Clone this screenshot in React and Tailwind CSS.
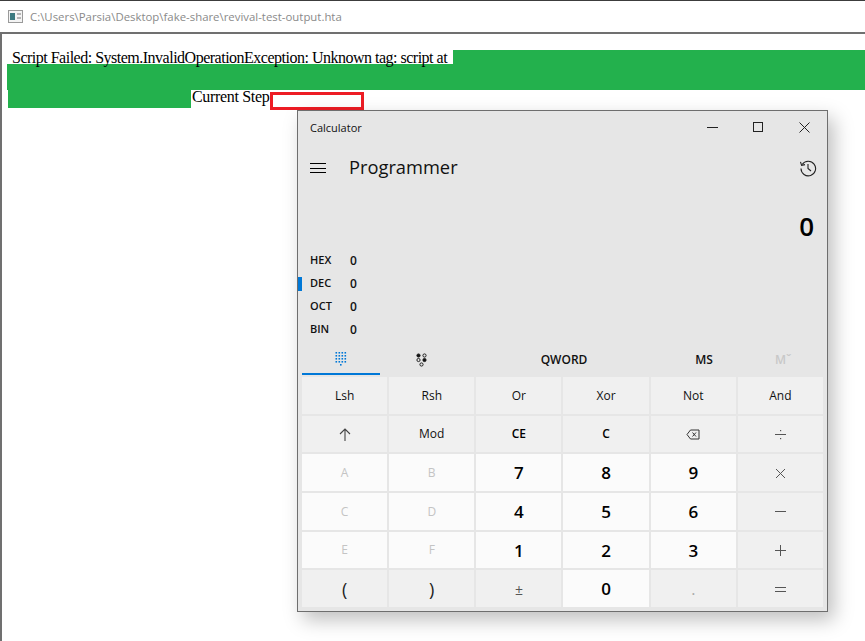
const sans = 'font-["Open_Sans","Noto_Sans",sans-serif]';

const Bksp = () => (
  <svg width="14" height="11" viewBox="0 0 14 11" fill="none" stroke="#333" strokeWidth="1">
    <path d="M4.5 1H13V10H4.5L1 5.5Z" />
    <path d="M6.5 3.5L10 7.5M10 3.5L6.5 7.5" />
  </svg>
);

const icons = {
  bksp: <Bksp />,
  up: (
    <svg width="12" height="13" viewBox="0 0 12 13" fill="none" stroke="#444" strokeWidth="1.1">
      <path d="M6 13V1M1 6l5-5 5 5" />
    </svg>
  ),
  div: (
    <svg width="13" height="13" viewBox="0 0 13 13" fill="#555">
      <rect x="1" y="6" width="11" height="1" />
      <rect x="6" y="2" width="1.2" height="1.2" />
      <rect x="6" y="10" width="1.2" height="1.2" />
    </svg>
  ),
  times: (
    <svg width="13" height="13" viewBox="0 0 13 13" fill="none" stroke="#555" strokeWidth="1">
      <path d="M2 2l9 9M11 2l-9 9" />
    </svg>
  ),
  minus: (
    <svg width="13" height="13" viewBox="0 0 13 13" fill="#555">
      <rect x="1" y="6" width="11" height="1" />
    </svg>
  ),
  plus: (
    <svg width="13" height="13" viewBox="0 0 13 13" fill="#555">
      <rect x="1" y="6" width="11" height="1" />
      <rect x="6" y="1" width="1" height="11" />
    </svg>
  ),
  eq: (
    <svg width="13" height="13" viewBox="0 0 13 13" fill="#555">
      <rect x="1" y="4" width="11" height="1" />
      <rect x="1" y="8" width="11" height="1" />
    </svg>
  ),
};

const keys = [
  [['Lsh', 'op'], ['Rsh', 'op'], ['Or', 'op'], ['Xor', 'op'], ['Not', 'op'], ['And', 'op']],
  [['up', 'op'], ['Mod', 'op'], ['CE', 'strong'], ['C', 'strong'], ['bksp', 'op'], ['div', 'op']],
  [['A', 'off'], ['B', 'off'], ['7', 'num'], ['8', 'num'], ['9', 'num'], ['times', 'op']],
  [['C', 'off'], ['D', 'off'], ['4', 'num'], ['5', 'num'], ['6', 'num'], ['minus', 'op']],
  [['E', 'off'], ['F', 'off'], ['1', 'num'], ['2', 'num'], ['3', 'num'], ['plus', 'op']],
  [['(', 'paren'], [')', 'paren'], ['±', 'math'], ['0', 'num'], ['.', 'dot'], ['eq', 'op']],
];

const keyStyles = {
  op: 'bg-[#f0f0f0] text-[12px] text-[#111]',
  strong: 'bg-[#f0f0f0] text-[12px] font-semibold text-black',
  math: 'bg-[#f0f0f0] text-[14px] text-[#555]',
  paren: 'bg-[#f0f0f0] text-[18px] text-[#222]',
  dot: 'bg-[#f0f0f0] text-[16px] text-[#aaa]',
  off: 'bg-[#fbfbfb] text-[12px] text-[#c4c4c4]',
  num: 'bg-[#fbfbfb] text-[17px] font-semibold text-black',
};

const radix = [['HEX', false], ['DEC', true], ['OCT', false], ['BIN', false]];

const Calculator = () => (
  <div className={`absolute left-[297px] top-[110px] flex h-[502px] w-[531px] flex-col border border-[#6e6e6e] bg-[#e6e6e6] shadow-[6px_8px_18px_rgba(0,0,0,0.25)] ${sans}`}>
    <div className="flex h-[32px] shrink-0 items-center justify-between pl-[12px]">
      <span className="pt-[2px] text-[11px] text-[#111]">Calculator</span>
      <div className="flex items-center">
        <div className="flex w-[46px] justify-center">
          <div className="h-px w-[11px] bg-[#222]" />
        </div>
        <div className="flex w-[46px] justify-center">
          <div className="size-[10px] border border-[#222]" />
        </div>
        <div className="flex w-[46px] justify-center">
          <svg width="11" height="11" viewBox="0 0 11 11" stroke="#222" strokeWidth="1"><path d="M.5.5l10 10M10.5.5l-10 10" /></svg>
        </div>
      </div>
    </div>
    <div className="flex h-[50px] shrink-0 items-center justify-between pl-[12px] pr-[10px]">
      <div className="flex items-center gap-[23px]">
        <div className="flex w-[16px] flex-col gap-[3.5px]">
          <div className="h-px bg-black" />
          <div className="h-px bg-black" />
          <div className="h-px bg-black" />
        </div>
        <span className="pb-[2px] text-[18.3px] text-[#111]">Programmer</span>
      </div>
      <svg width="18" height="18" viewBox="0 0 18 18" fill="none" stroke="#222" strokeWidth="1.1">
        <path d="M3.2 5.5A7.3 7.3 0 1 1 2 9.5" />
        <path d="M1.5 2.8L2.6 6.3L6 5.6" />
        <path d="M9 5V9.5L12 12" />
      </svg>
    </div>
    <div className="flex h-[50px] shrink-0 items-center justify-end pr-[13px] pt-[16px] text-[26px] font-semibold leading-none text-black">0</div>
    <div className="mt-[6px] flex shrink-0 flex-col">
      {radix.map(([name, active]) => (
        <div key={name} className="flex h-[23px] items-center">
          <div className={active ? 'h-[14px] w-[4px] bg-[#0078d7]' : 'h-[14px] w-[4px]'} />
          <span className="w-[48px] pl-[8px] text-[11px] font-semibold text-[#111]">{name}</span>
          <span className="text-[12px] font-semibold text-[#111]">0</span>
        </div>
      ))}
    </div>
    <div className="flex h-[34px] shrink-0 items-center px-[4px]">
      <div className="flex h-[34px] w-[78px] items-center justify-center border-b-2 border-[#0078d7] pt-[3px]">
        <svg width="12" height="14" viewBox="0 0 12 14" fill="#0078d7">
          {[0, 1, 2, 3].map((r) => [0, 1, 2, 3].map((c) => (
            <rect key={`${r}-${c}`} x={c * 3 + 0.5} y={r * 3} width="1.6" height="1.6" />
          )))}
          <rect x="5" y="12" width="1.6" height="1.6" />
        </svg>
      </div>
      <div className="flex w-[84px] justify-center pt-[4px]">
        <svg width="12" height="14" viewBox="0 0 12 14" fill="none" stroke="#111" strokeWidth="0.9">
          <circle cx="2.5" cy="2.5" r="1.6" fill="#111" />
          <circle cx="8.5" cy="2.5" r="1.6" />
          <circle cx="2.5" cy="7" r="1.6" />
          <circle cx="8.5" cy="7" r="1.6" fill="#111" />
          <circle cx="5.5" cy="11.5" r="1.6" />
        </svg>
      </div>
      <span className="ml-[68px] w-[64px] pt-[4px] text-center text-[12px] font-semibold text-[#111]">QWORD</span>
      <span className="ml-[96px] w-[24px] pt-[4px] text-center text-[12px] font-semibold text-[#111]">MS</span>
      <span className="ml-[59px] pt-[4px] text-[12px] font-semibold text-[#c8c8c8]">Mˇ</span>
    </div>
    <div className="grid flex-1 grid-cols-6 grid-rows-6 gap-[2px] px-[4px] pb-[4px] pt-[2px]">
      {keys.flat().map(([label, kind], i) => (
        <div key={i} className={`flex items-center justify-center pt-[1px] ${keyStyles[kind]}`}>
          {icons[label] ?? label}
        </div>
      ))}
    </div>
  </div>
);

export default function App() {
  return (
    <div className="relative h-[641px] w-[865px] overflow-hidden bg-white">
      <div className="h-px bg-[#3c3c3c]" />
      <div className="flex h-[31px] items-center gap-[7px] pl-[8px]">
        <svg width="15" height="13" viewBox="0 0 15 13">
          <rect x="0.5" y="0.5" width="14" height="12" fill="#f4f4f4" stroke="#9a9a9a" />
          <rect x="2" y="3" width="5" height="7" fill="#3c7a80" />
          <rect x="9" y="3" width="4" height="2" fill="#b5b5b5" />
          <rect x="9" y="7" width="4" height="2" fill="#b5b5b5" />
        </svg>
        <span className={`text-[11.4px] text-[#8a8a8a] ${sans}`}>C:\Users\Parsia\Desktop\fake-share\revival-test-output.hta</span>
      </div>
      <div className="h-[609px] border-l-2 border-t-2 border-[#707070] pl-[5px] pt-[16px] font-['Liberation_Serif',serif] text-[16px] leading-[18px] text-black">
        <div className="flex h-[14px]">
          <span className="whitespace-nowrap pl-[5px] pr-[6px] leading-[16px] tracking-[-0.5px]">Script Failed: System.InvalidOperationException: Unknown tag: script at</span>
          <div className="flex-1 bg-[#23b14d]" />
        </div>
        <div className="h-[26px] bg-[#23b14d]" />
        <div className="flex">
          <div className="ml-px h-[18px] w-[183px] bg-[#23b14d]" />
          <span className="ml-px h-[18px] whitespace-nowrap leading-[14px] tracking-[-0.33px]">Current Step</span>
          <div className="ml-px mt-[2px] h-[18px] w-[94px] border-[3px] border-[#ed1c24]" />
        </div>
      </div>
      <Calculator />
    </div>
  );
}
